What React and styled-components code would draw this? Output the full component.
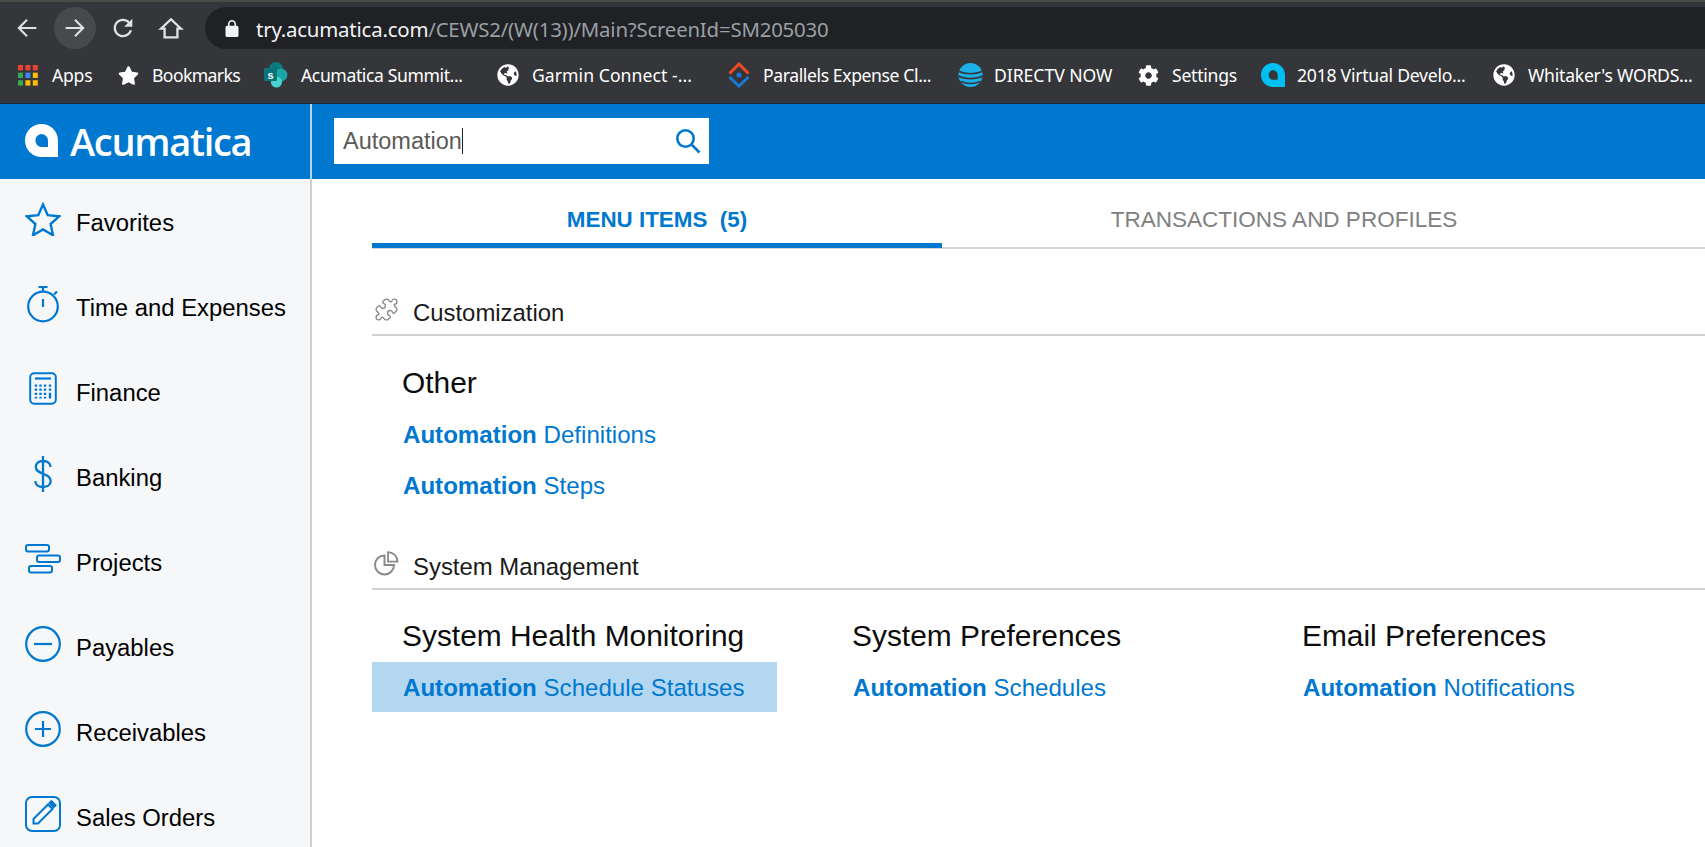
import React from 'react'
import styled, { createGlobalStyle } from 'styled-components'
import { FaStar, FaCog, FaGlobeAmericas } from 'react-icons/fa'
import { Puzzle } from 'lucide-react'

const GlobalStyle = createGlobalStyle`
  html, body { margin: 0; padding: 0; height: 100%; overflow: hidden; background: #fff; }
  * { box-sizing: border-box; }
`

const BLUE = '#0078cf'
const ARIAL = '"Liberation Sans", Arial, sans-serif'
const CHROME_FONT = '"Noto Sans", "Open Sans", sans-serif'

const Page = styled.div`
  height: 847px;
  display: flex;
  flex-direction: column;
  overflow: hidden;
  font-family: ${ARIAL};
`

/* browser chrome */
const NavBar = styled.div`
  height: 49px;
  flex: none;
  display: flex;
  align-items: flex-end;
  background: #35363a;
  border-top: 2px solid #474d49;
  padding-left: 6px;
`

const NavBtn = styled.div`
  width: 42px;
  height: 42px;
  margin-right: ${props => props.$mr || 6}px;
  flex: none;
  display: flex;
  align-items: center;
  justify-content: center;
  border-radius: 50%;
  color: #dee1e6;
  background: ${props => props.$active ? '#48494d' : 'transparent'};
`

const UrlPill = styled.div`
  flex: 1;
  height: 42px;
  margin-left: 4px;
  display: flex;
  align-items: center;
  padding-left: 20px;
  background: #202124;
  border-radius: 21px 0 0 21px;
  color: #f1f3f4;
`

const UrlText = styled.div`
  margin-left: 17px;
  padding-top: 1px;
  font-family: ${CHROME_FONT};
  font-size: 20.4px;
  letter-spacing: -0.2px;
  white-space: nowrap;
  color: #9aa0a6;
  b { font-weight: 400; color: #f1f3f4; }
`

const BookmarkBar = styled.div`
  height: 55px;
  flex: none;
  display: flex;
  align-items: center;
  padding: 0 0 2px 18px;
  background: #35363a;
  border-bottom: 1px solid #1c2a38;
`

const Bookmark = styled.div`
  display: flex;
  align-items: center;
  flex: none;
  margin-right: ${props => props.$gap}px;
  color: #fff;
`

const BookmarkLabel = styled.span`
  width: ${props => props.$w}px;
  margin-left: ${props => props.$lead}px;
  font-family: ${CHROME_FONT};
  font-size: 17.6px;
  letter-spacing: ${props => props.$ls}px;
  white-space: nowrap;
`

/* app header */
const Header = styled.div`
  height: 75px;
  flex: none;
  display: flex;
  background: ${BLUE};
`

const LogoCell = styled.div`
  width: 312px;
  flex: none;
  display: flex;
  align-items: center;
  padding: 0 0 2px 25px;
  border-right: 2px solid #b5d6ef;
  color: #fff;
`

const LogoText = styled.span`
  margin-left: 12px;
  font-family: "Open Sans", sans-serif;
  font-size: 38px;
  font-weight: 600;
  letter-spacing: -1.3px;
  line-height: 1;
`

const SearchBox = styled.div`
  width: 375px;
  height: 46px;
  margin: 14px 0 0 22px;
  display: flex;
  align-items: center;
  justify-content: space-between;
  padding: 0 8px 0 9px;
  background: #fff;
`

const SearchValue = styled.span`
  font-size: 23.5px;
  line-height: 26px;
  color: #5a5a5a;
  border-right: 1px solid #222;
`

/* body */
const Main = styled.div`
  flex: 1;
  display: flex;
  min-height: 0;
`

const Sidebar = styled.nav`
  width: 312px;
  flex: none;
  padding-top: 1px;
  background: #f6f7f9;
  border-right: 2px solid #cfd1d6;
`

const NavItem = styled.div`
  height: 85px;
  display: flex;
  align-items: center;
  padding-left: 25px;
  color: ${BLUE};
`

const NavIconCell = styled.div`
  width: 36px;
  height: 38px;
  margin-bottom: 8px;
  flex: none;
  display: flex;
  align-items: center;
  justify-content: center;
`

const NavLabel = styled.span`
  margin-left: 15px;
  font-size: 23.85px;
  color: #000;
  white-space: nowrap;
`

const Content = styled.div`
  flex: 1;
  min-width: 0;
  padding-left: 60px;
`

const Tabs = styled.div`
  display: flex;
  border-bottom: 2px solid #d4d5d9;
`

const Tab = styled.div`
  width: ${props => props.$w}px;
  height: 69px;
  padding-top: 18px;
  display: flex;
  align-items: center;
  justify-content: center;
  font-size: ${props => props.$active ? 22.4 : 22.5}px;
  font-weight: ${props => props.$active ? 700 : 400};
  color: ${props => props.$active ? BLUE : '#808080'};
  white-space: pre;
  border-bottom: 5px solid ${props => props.$active ? BLUE : 'transparent'};
  margin-bottom: -1px;
`

const SectionHead = styled.div`
  height: 48px;
  margin-top: ${props => props.$top}px;
  padding-top: 4px;
  display: flex;
  align-items: center;
  border-bottom: 2px solid #d1d2d6;
  color: #8a8a8a;
`

const SectionIcon = styled.div`
  width: 41px;
  margin-bottom: 8px;
  padding-left: 2px;
  flex: none;
  display: flex;
`

const SectionTitle = styled.span`
  font-size: 23.9px;
  color: #1a1a1a;
`

const Groups = styled.div`
  display: flex;
  margin-top: ${props => props.$top}px;
`

const Group = styled.div`
  width: 450px;
  flex: none;
`

const GroupTitle = styled.div`
  height: 50px;
  padding-left: 30px;
  display: flex;
  align-items: center;
  font-size: 29.9px;
  color: #0c0c0c;
  white-space: nowrap;
`

const MenuLink = styled.a`
  width: 405px;
  height: 50px;
  margin-top: 1px;
  padding: 1px 0 0 31px;
  display: flex;
  align-items: center;
  font-size: 24.1px;
  color: ${BLUE};
  white-space: pre;
  background: ${props => props.$selected ? '#b3d7f1' : 'transparent'};
  b { font-weight: 700; }
`

/* drawings */
const AppsIcon = () => (
  <svg width="20" height="21" viewBox="0 0 20 21">
    {[
      ['#ea4335', '#ea4335', '#ea4335'],
      ['#34a853', '#4285f4', '#fbbc05'],
      ['#34a853', '#fbbc05', '#fbbc05']
    ].map((row, y) => row.map((fill, x) => (
      <rect key={`${x}${y}`} x={x * 7.4} y={y * 7.6} width="5" height="5.4" fill={fill} />
    )))}
  </svg>
)

const SharePointIcon = () => (
  <svg width="24" height="26" viewBox="0 0 24 26">
    <circle cx="12" cy="7" r="7" fill="#0b7a7f" />
    <circle cx="17" cy="13" r="6.4" fill="#1ba7a7" />
    <circle cx="12.5" cy="20" r="5.6" fill="#46d3cf" />
    <rect x="0" y="6" width="13" height="13" rx="1" fill="#07757a" />
    <text x="6.5" y="16.5" textAnchor="middle" fontSize="11" fontWeight="700" fontFamily="Liberation Sans" fill="#fff">s</text>
  </svg>
)

const ParallelsIcon = () => (
  <svg width="24" height="26" viewBox="0 0 24 26" fill="none">
    <path d="M2.5 11.5 12 2l9.5 9.5" stroke="#f04a23" strokeWidth="3" />
    <path d="M2.5 15 12 24l9.5-9" stroke="#1a78d6" strokeWidth="3" />
    <circle cx="12" cy="13" r="2.6" fill="#1a78d6" />
  </svg>
)

const AttIcon = () => (
  <svg width="25" height="26" viewBox="0 0 25 26">
    <circle cx="12.5" cy="13" r="12" fill="#1cb0e8" />
    <path d="M1 9.5c6 3 17 3 23 0M.6 14c6 3.4 18 3.4 23.8 0M2.5 19.5c6 2.4 14 2.4 20 0" fill="none" stroke="#35363a" strokeWidth="1.7" />
  </svg>
)

const LogoMark = ({ size, color }) => (
  <svg width={size} height={size} viewBox="0 0 33 33">
    <path
      fillRule="evenodd"
      fill={color}
      d="M16.5 0C25.6 0 33 7.4 33 16.5V33H16.5C7.4 33 0 25.6 0 16.5S7.4 0 16.5 0ZM16.5 10C13 10 10.5 13 10.5 16.5S13 23 16.5 23H23V16.5C23 13 20 10 16.5 10Z"
    />
  </svg>
)

const Outline = styled.svg`
  fill: none;
  stroke: currentColor;
  stroke-width: ${props => props.$sw || 2};
`

const sidebarIcons = {
  star: (
    <Outline width="36" height="34" viewBox="0 0 36 34" $sw="2.4">
      <path d="M18 2.5l4.7 10.6 11.5 1.2-8.6 7.7 2.4 11.3L18 27.4 8 33.3l2.4-11.3-8.6-7.7 11.5-1.2z" />
    </Outline>
  ),
  timer: (
    <Outline width="33" height="38" viewBox="0 0 33 38" $sw="2.2">
      <circle cx="16" cy="21.5" r="14.8" />
      <path d="M11.5 2h9M16 2v5M27 9.5l3-3M16 14v8" />
    </Outline>
  ),
  calc: (
    <Outline width="28" height="33" viewBox="0 0 28 33" $sw="2">
      <rect x="1.2" y="1.2" width="25.6" height="30.6" rx="4" />
      <path d="M6 6.5h16" strokeWidth="2.2" />
      <path d="M7 12.5v14M11.5 12.5v14M16 12.5v14" strokeWidth="2.4" strokeDasharray="2.2 1.9" />
      <path d="M21 12.5v14" strokeWidth="2.4" strokeDasharray="2.2 1.9 2.2 1.9 6" />
    </Outline>
  ),
  dollar: (
    <Outline width="18" height="36" viewBox="0 0 18 36" $sw="2.3">
      <path d="M16.5 11c0-3.6-3-6-7.5-6S1.8 7.4 1.8 11c0 8 14.9 5.5 14.9 14 0 3.8-3.2 6-7.7 6s-7.700-2.5-7.700-6M9 0v36" />
    </Outline>
  ),
  gantt: (
    <Outline width="36" height="30" viewBox="0 0 36 30" $sw="2">
      <rect x="1" y="1" width="23" height="6.4" rx="2" />
      <rect x="12" y="11.5" width="23" height="6.4" rx="2" />
      <rect x="4" y="22" width="23" height="6.4" rx="2" />
    </Outline>
  ),
  minus: (
    <Outline width="36" height="36" viewBox="0 0 36 36" $sw="2.2">
      <circle cx="18" cy="18" r="16.8" />
      <path d="M9 18h18" />
    </Outline>
  ),
  plus: (
    <Outline width="36" height="36" viewBox="0 0 36 36" $sw="2.2">
      <circle cx="18" cy="18" r="16.8" />
      <path d="M10 18h16M18 10v16" />
    </Outline>
  ),
  pencil: (
    <Outline width="36" height="36" viewBox="0 0 36 36" $sw="2">
      <rect x="1" y="1" width="34" height="34" rx="6" />
      <path d="M8.5 27.5V23L23 8.5l4.5 4.5L13 27.5z" />
      <path d="M24.5 7l2-1.8 4 4-2 2z" fill="currentColor" />
    </Outline>
  )
}

const navItems = [
  ['star', 'Favorites'],
  ['timer', 'Time and Expenses'],
  ['calc', 'Finance'],
  ['dollar', 'Banking'],
  ['gantt', 'Projects'],
  ['minus', 'Payables'],
  ['plus', 'Receivables'],
  ['pencil', 'Sales Orders']
]

const globe = <FaGlobeAmericas size={22} />

const bookmarks = [
  { icon: <AppsIcon />, label: 'Apps', w: 40, lead: 14, gap: 26, ls: -0.25 },
  { icon: <FaStar size={21} />, label: 'Bookmarks', w: 88, lead: 13, gap: 24, ls: -0.6 },
  { icon: <SharePointIcon />, label: 'Acumatica Summit...', w: 162, lead: 13, gap: 34, ls: -0.4 },
  { icon: globe, label: 'Garmin Connect -...', w: 162, lead: 13, gap: 33, ls: 0.05 },
  { icon: <ParallelsIcon />, label: 'Parallels Expense Cl...', w: 169, lead: 12, gap: 26, ls: -0.4 },
  { icon: <AttIcon />, label: 'DIRECTV NOW', w: 118, lead: 11, gap: 26, ls: -0.05 },
  { icon: <FaCog size={21} />, label: 'Settings', w: 64, lead: 13, gap: 25, ls: -0.25 },
  { icon: <LogoMark size={24} color="#00c0f3" />, label: '2018 Virtual Develo...', w: 169, lead: 12, gap: 27, ls: -0.25 },
  { icon: globe, label: "Whitaker's WORDS...", w: 165, lead: 13, gap: 0, ls: -0.25 }
]

export default function App() {
  return (
    <Page>
      <GlobalStyle />
      <NavBar>
        <NavBtn>
          <svg width="28" height="28" viewBox="0 0 24 24" fill="none" stroke="currentColor" strokeWidth="1.8"><path d="M20 12H5M12 5l-7 7 7 7" /></svg>
        </NavBtn>
        <NavBtn $active>
          <svg width="28" height="28" viewBox="0 0 24 24" fill="none" stroke="currentColor" strokeWidth="1.8"><path d="M4 12h15M12 5l7 7-7 7" /></svg>
        </NavBtn>
        <NavBtn>
          <svg width="28" height="28" viewBox="0 0 24 24" fill="currentColor"><path d="M17.65 6.35C16.2 4.9 14.21 4 12 4c-4.42 0-7.99 3.58-7.99 8s3.57 8 7.99 8c3.73 0 6.84-2.55 7.73-6h-2.08c-.82 2.33-3.04 4-5.65 4-3.31 0-6-2.69-6-6s2.69-6 6-6c1.66 0 3.14.69 4.22 1.78L13 11h7V4l-2.35 2.35z" /></svg>
        </NavBtn>
        <NavBtn $mr={9}>
          <svg width="28" height="28" viewBox="0 0 24 24" fill="none" stroke="currentColor" strokeWidth="2"><path d="M12 4.5 3.5 12.5H6.5V20h11v-7.5h3z" /></svg>
        </NavBtn>
        <UrlPill>
          <svg width="14" height="17" viewBox="4 1 16 21" fill="currentColor"><path d="M18 8h-1V6c0-2.76-2.24-5-5-5S7 3.24 7 6v2H6c-1.1 0-2 .9-2 2v10c0 1.1.9 2 2 2h12c1.1 0 2-.9 2-2V10c0-1.1-.9-2-2-2zM9 6c0-1.66 1.34-3 3-3s3 1.34 3 3v2H9V6z" /></svg>
          <UrlText><b>try.acumatica.com</b>/CEWS2/(W(13))/Main?ScreenId=SM205030</UrlText>
        </UrlPill>
      </NavBar>

      <BookmarkBar>
        {bookmarks.map(b => (
          <Bookmark key={b.label} $gap={b.gap}>
            {b.icon}
            <BookmarkLabel $w={b.w} $lead={b.lead} $ls={b.ls}>{b.label}</BookmarkLabel>
          </Bookmark>
        ))}
      </BookmarkBar>

      <Header>
        <LogoCell>
          <LogoMark size={33} color="#fff" />
          <LogoText>Acumatica</LogoText>
        </LogoCell>
        <SearchBox>
          <SearchValue>Automation</SearchValue>
          <svg width="26" height="26" viewBox="0 0 26 26" fill="none" stroke={BLUE} strokeWidth="2.6">
            <circle cx="10.5" cy="10.5" r="8.2" />
            <path d="M16.5 16.5 24.5 24.5" />
          </svg>
        </SearchBox>
      </Header>

      <Main>
        <Sidebar>
          {navItems.map(([icon, label]) => (
            <NavItem key={label}>
              <NavIconCell>{sidebarIcons[icon]}</NavIconCell>
              <NavLabel>{label}</NavLabel>
            </NavItem>
          ))}
        </Sidebar>

        <Content>
          <Tabs>
            <Tab $active $w={570}>{'MENU ITEMS  (5)'}</Tab>
            <Tab $w={684}>TRANSACTIONS AND PROFILES</Tab>
          </Tabs>

          <SectionHead $top={39}>
            <SectionIcon>
              <Puzzle size={25} strokeWidth={1.3} />
            </SectionIcon>
            <SectionTitle>Customization</SectionTitle>
          </SectionHead>
          <Groups $top={22}>
            <Group>
              <GroupTitle>Other</GroupTitle>
              <MenuLink><b>Automation</b> Definitions</MenuLink>
              <MenuLink><b>Automation</b> Steps</MenuLink>
            </Group>
          </Groups>

          <SectionHead $top={32}>
            <SectionIcon>
              <svg width="25" height="25" viewBox="0 0 25 25" fill="none" stroke="currentColor" strokeWidth="2">
                <path d="M10.5 4.5a9.5 9.5 0 1 0 9.5 9.5h-9.5z" />
                <path d="M14 1.2a9.5 9.5 0 0 1 9.5 9.5H14z" strokeWidth="1.8" />
              </svg>
            </SectionIcon>
            <SectionTitle>System Management</SectionTitle>
          </SectionHead>
          <Groups $top={21}>
            <Group>
              <GroupTitle>System Health Monitoring</GroupTitle>
              <MenuLink $selected><b>Automation</b> Schedule Statuses</MenuLink>
            </Group>
            <Group>
              <GroupTitle>System Preferences</GroupTitle>
              <MenuLink><b>Automation</b> Schedules</MenuLink>
            </Group>
            <Group>
              <GroupTitle>Email Preferences</GroupTitle>
              <MenuLink><b>Automation</b> Notifications</MenuLink>
            </Group>
          </Groups>
        </Content>
      </Main>
    </Page>
  )
}
